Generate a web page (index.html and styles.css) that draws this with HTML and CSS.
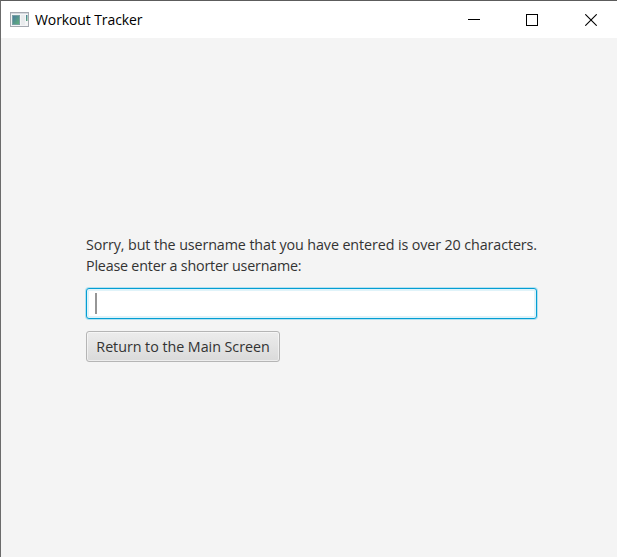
FILE: index.html
```html
<!DOCTYPE html>
<html lang="en">
<head>
<meta charset="utf-8">
<title>Workout Tracker</title>
<link rel="stylesheet" href="styles.css">
</head>
<body>
<div class="window">
  <header class="titlebar">
    <svg class="app-icon" width="19" height="15" viewBox="0 0 19 15">
      <defs><linearGradient id="pane" x1="0" y1="0" x2="1" y2="1"><stop offset="0" stop-color="#4877a0"/><stop offset="1" stop-color="#62b478"/></linearGradient></defs>
      <rect x=".5" y=".5" width="18" height="14" fill="#f4f5f6" stroke="#a5a9b0"/>
      <path d="M1 1.5h17" stroke="#d5d9df"/>
      <rect x="2.5" y="3.5" width="7" height="9" fill="url(#pane)" stroke="#79a1a4"/>
      <path d="M11 3h4v10h-4z" fill="#e9ebed"/>
      <path d="M16 3h1.5v6H16z" fill="url(#pane)"/>
    </svg>
    <span class="title">Workout Tracker</span>
    <div class="controls">
      <svg width="12" height="12" viewBox="0 0 12 12"><path d="M0 5.5h12" stroke="#000"/></svg>
      <svg width="12" height="12" viewBox="0 0 12 12"><rect x=".5" y=".5" width="11" height="11" fill="none" stroke="#000"/></svg>
      <svg class="close" width="12" height="12" viewBox="0 0 12 12"><path d="M.3.3l11.4 11.4M11.7.3L.3 11.7" stroke="#000" stroke-width="1.1"/></svg>
    </div>
  </header>
  <main class="form">
    <div class="message"><span class="line-long">Sorry, but the username that you have entered is over 20 characters.</span><br><span class="line-short">Please enter a shorter username:</span></div>
    <div class="field"><span class="caret"></span></div>
    <button class="button" type="button">Return to the Main Screen</button>
  </main>
</div>
</body>
</html>
```
FILE: styles.css
```css
body {
  margin: 0;
  font-family: "Open Sans", "Noto Sans", sans-serif;
}
.window {
  box-sizing: border-box;
  width: 617px;
  height: 557px;
  border-top: 1px solid #5c5c5c;
  border-left: 1px solid #6b6b6b;
  background: #f4f4f4;
  overflow: hidden;
}
.titlebar {
  display: flex;
  align-items: center;
  height: 37px;
  padding: 0 20px 0 9px;
  background: #fff;
}
.app-icon {
  margin-right: 6px;
}
.title {
  font-size: 14px;
  letter-spacing: -0.1px;
  color: #000;
  white-space: nowrap;
}
.controls {
  display: flex;
  gap: 46px;
  margin-left: auto;
}
.controls svg {
  display: block;
}
.controls .close {
  margin-left: 1px;
}
.form {
  width: 451px;
  padding: 196px 0 0 85px;
}
.message {
  font-size: 14.3px;
  line-height: 21px;
  color: #333;
  white-space: nowrap;
}
.line-long {
  letter-spacing: -0.1px;
}
.line-short {
  letter-spacing: -0.2px;
}
.field {
  box-sizing: border-box;
  display: flex;
  align-items: center;
  height: 31px;
  margin: 12px 0;
  padding-left: 8px;
  border: 1px solid #039ed3;
  border-radius: 3px;
  background: #fff;
  box-shadow: 0 0 0 1px #b5e1f0, inset 0 0 0 2px #e0f3f9;
}
.caret {
  width: 2px;
  height: 21px;
  background: #969696;
}
.button {
  display: block;
  box-sizing: border-box;
  width: 194px;
  height: 31px;
  padding: 0;
  border: 1px solid #b5b5b5;
  border-radius: 3px;
  background: linear-gradient(#ececec, #dadada);
  box-shadow: inset 0 0 0 1px rgba(255, 255, 255, 0.5);
  font-family: inherit;
  font-size: 14.3px;
  line-height: 29px;
  letter-spacing: -0.04px;
  color: #333;
  white-space: nowrap;
}
```
